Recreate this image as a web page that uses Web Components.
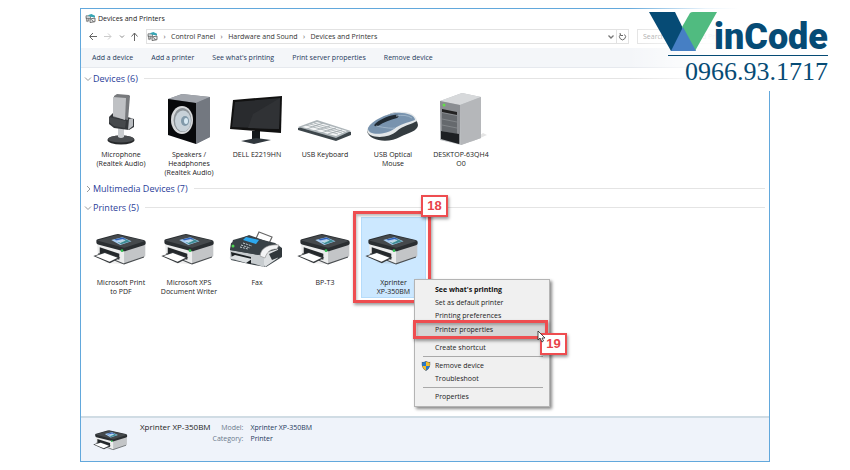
<!DOCTYPE html>
<html lang="en">
<head>
<meta charset="utf-8">
<title>Devices and Printers</title>
<style>
  body { margin: 0; background: #fff; color: #333; font: 7px/9px "Open Sans", "Noto Sans", sans-serif; }
</style>
</head>
<body>
<devices-page></devices-page>

<script>
const base = `:host,*{box-sizing:border-box}button,input{font:inherit;color:inherit;border:0;padding:0;margin:0;background:none}svg{display:block}`;

const art = {
  mini: `<svg viewBox="0 0 12 10" width="11" height="9"><path d="M1 2h5v3H1zM1.500 4v4.500M4 5v3" fill="#cfd8dc" stroke="#666" stroke-width=".8"/><path d="M3 1.500L7 0l4 2v2L6 3z" fill="#35a5b4"/><path d="M5.500 5.500L11 4.500v4l-5.500 1zM3 6v3M7 6l2.500 3" fill="#eee" stroke="#555" stroke-width=".9"/></svg>`,
  mic: `<svg viewBox="0 0 56 52" width="56" height="52"><ellipse cx="28" cy="47" rx="13.500" ry="4.500" fill="#26282a"/><ellipse cx="28" cy="46" rx="13" ry="3.500" fill="#4a4d50"/><path d="M25 35h6v9q-3 2-6 0z" fill="#c9cccf"/><path d="M16 24l4-4 18 5 3 1v8l-5 3-15-2-5-4z" fill="#34373a"/><path d="M36 26l4-1v8l-5 4z" fill="#b9bcc0"/><path d="M21 3l3-2 12 1 1 1-2 24-15-3z" fill="#77797c"/><path d="M20 4l13 1-1 22-12-4z" fill="#bfc1c4"/><path d="M16 24l17 4-1 7-11-2-5-4z" fill="#46494c"/></svg>`,
  speaker: `<svg viewBox="0 0 56 52" width="56" height="52"><path d="M7 6l14-5 28 3v40l-14 7z" fill="#7d8289"/><path d="M7 6l14-5 28 3-14 6z" fill="#a2a6ad"/><path d="M35 10l14-6v40l-14 7z" fill="#737880"/><path d="M7 6l28 4v41L7 42z" fill="#08090b"/><ellipse cx="21" cy="27" rx="11" ry="14" fill="#d6d8da"/><ellipse cx="21.500" cy="27" rx="9" ry="12" fill="#8c9398"/><ellipse cx="22" cy="28" rx="8" ry="10.500" fill="#c7d1d8"/><ellipse cx="24" cy="28" rx="4" ry="5" fill="#8199a9"/><ellipse cx="25" cy="28" rx="2" ry="3" fill="#d9eaf4"/></svg>`,
  monitor: `<svg viewBox="0 0 56 52" width="56" height="52"><path d="M23 38h8v9h-8z" fill="#14181b"/><path d="M12 48l15-3 15 2-17 4z" fill="#30373d"/><path d="M4 7l49-4-1 37-51-4z" fill="#111"/><path d="M6 9l45-4-1 31-47-2z" fill="#292b2e"/><path d="M24 21L51 5l-1 31-31-1z" fill="#303235"/></svg>`,
  keyboard: `<svg viewBox="0 0 56 52" width="56" height="52"><path d="M1 35l19-7 34 11v3l-15 6-38-11z" fill="#3d464b"/><path d="M1 34l19-7 34 11-15 7z" fill="#adb5b9"/><path d="M5 34l15-5 30 9-11 5z" fill="#f3f5f6"/><path d="M9 32l32 9M13 31l32 9M17 30l31 9M10 36l16-6M17 38l16-5M24 40l15-5M31 41l14-4" stroke="#9fa8ac" stroke-width=".8"/></svg>`,
  mouse: `<svg viewBox="0 0 56 52" width="56" height="52"><path d="M2 38c2-7 15-14 25-18 12-3 25 2 26 12 0 6-10 8-18 12-10 6-31 5-33-6z" fill="#343c40"/><path d="M2 37C3 31 14 24 27 20c12-3 24 0 25 8-5 3-15 5-20 10-8 8-30 8-30-1z" fill="#e3e7e9"/><path d="M3 35c4-8 19-14 27-15 10-1 20 2 20 7-8 3-15 4-21 9-8 6-27 7-26-1z" fill="#7893ae"/><path d="M10 31c4-4 12-8 19-9 5-1 6 1 3 3-7 2-13 4-19 8-2 1-5 0-3-2z" fill="#202a33"/><path d="M11 33q15 3 19 2M31 23q10-2 16 2" stroke="#9db3c7" fill="none"/></svg>`,
  tower: `<svg viewBox="0 0 56 52" width="56" height="52"><path d="M38 49l16-7-4-2z" fill="#e5e5e5"/><path d="M7 8L29 0l19 4v41l-20 7-21-5z" fill="#bcbfc2"/><path d="M7 8L29 0l19 4-21 8z" fill="#d7d9db"/><path d="M27 12l21-8v41l-20 7z" fill="#b5b7ba"/><path d="M7 8l20 4v39L8 46z" fill="#8b8e92"/><path d="M9 16l15 3v3L9 19z" fill="#222"/><path d="M9 20l15 3v18L9 38z" fill="#65696d"/><path d="M9 26l15 3M9 32l15 3" stroke="#888b8f" stroke-width=".8"/><path d="M8 38l18 3v10L8 46z" fill="#1d2023"/><circle cx="11" cy="12" r="1.500" fill="#63e04a"/></svg>`,
  printer: `<svg viewBox="10 20 160 94" width="100%" height="100%"><path d="M40 108l62 4 66-24z" fill="#0001"/><path d="M22 46l80 24v41L24 82z" fill="#eceded"/><path d="M102 70l63-22v38q0 4-4 5l-59 20z" fill="#c3c5c7"/><path d="M26 80l72 30 4 1 59-20" fill="none" stroke="#4a4e51" stroke-width="3"/><path d="M20 42q0-3 4-4l52-14q6-2 12-1l72 17q6 2 6 6v5q0 3-5 5l-52 16q-7 3-14 0L25 54q-5-2-5-6z" fill="#2a2e31"/><path d="M22 42l56-16q5-1 10 0l72 16q4 1 0 3l-52 17q-6 2-12 0z" fill="#45494c"/><path d="M64 40l33-8 27 12-33 11z" fill="#a9cdf0"/><path d="M73 39l24-6 12 5-24 7z" fill="#2d62bd"/><path d="M84 47l22-9 15 6-28 9z" fill="#3c8b93"/><path d="M78 42l20-5 9 5-16 7z" fill="#eaf5ff" opacity=".7"/><path d="M30 62l58 19v18L30 82z" fill="#24282b"/><path d="M11 88l34-12 46 17-31 16z" fill="#34383b"/><path d="M17 88l28-9 38 14-24 12z" fill="#fff"/><circle cx="96" cy="72" r="4" fill="#35c254"/></svg>`,
  fax: `<svg viewBox="0 0 56 40" width="56" height="40"><path d="M31 3l13 5-6 13-13-5z" fill="#fff" stroke="#666" stroke-width="1.200"/><path d="M2 21l3-10L19 7l28 7 7 5v9l-16 10-12-2L3 31z" fill="#3a4247"/><path d="M30 26l20-6v9l-13 9z" fill="#dde0e2"/><path d="M2 21l34 6v11l-9-3-25-5z" fill="#c7cccf"/><path d="M3 14L21 6l22 8-10 12-8-1-23-4z" fill="#394247"/><path d="M18 8l13 3-3 4-13-4z" fill="#2da9ef"/><path d="M13 16l9 3M15 14l9 3M12 18l8 2" stroke="#c4cdd1" stroke-dasharray="2 1"/><path d="M3 23l20 5v7L4 30z" fill="#1b2023"/><path d="M1 29l6-3 17 4-6 4z" fill="#dce0e2"/><path d="M32 27c1-8 8-12 19-11l-2 4c-7 0-10 3-12 9z" fill="#f3f4f5" stroke="#888" stroke-width=".6"/><path d="M41 25l13-6v8l-10 4z" fill="#30373b"/><circle cx="5" cy="17" r="1.500" fill="#4fd552"/></svg>`,
  shield: `<svg viewBox="0 0 12 12" width="10" height="10"><path d="M6 0q3 2 5 1 1 8-5 11-6-3-5-11 2 1 5-1z" fill="#4d5c68"/><path d="M6 1v5H1.500V2Q4 2 6 1zM6 6h4.500Q9 10 6 11z" fill="#2779cb"/><path d="M6 1q2 1 4.500 1v4H6zM1.500 6H6v5Q3 10 1.500 6z" fill="#f3bd28"/></svg>`
};

function define(name, template) {
  customElements.define(name, class extends HTMLElement {
    connectedCallback() {
      if (this.shadowRoot) return;
      const root = this.attachShadow({ mode: "open" });
      root.innerHTML = typeof template === "function" ? template(this) : template;
    }
  });
}

define("device-art", el => `<style>${base}:host{display:block}</style>${art[el.getAttribute("kind")]}`);

define("title-bar", `<style>${base}:host{display:flex;align-items:center;gap:2px;height:18px;padding:0 4px;color:#222}h1{font:inherit;margin:0}</style>
  <device-art kind="mini"></device-art><h1><slot></slot></h1>`);

define("address-bar", `<style>${base}
  :host{display:flex;align-items:center;height:19px;padding:0 4px;gap:2px;color:#333}
  .nav{display:flex;align-items:center;gap:5px;width:59px;padding-left:3px}
  .nav button{display:block}
  .nav button svg{fill:none;stroke:#666}
  .path{flex:1;display:flex;align-items:center;height:15px;border:1px solid #e2e2e2}
  ol{display:flex;list-style:none;margin:0;padding:0;flex:1}
  li{display:flex}li::before{content:"›";width:13px;text-align:center;color:#555}
  a{color:inherit;text-decoration:none}
  .drop,.reload{display:grid;place-items:center;height:15px}
  .drop{width:10px}.reload{width:12px;border-left:1px solid #e2e2e2}
  input{width:128px;height:15px;border:1px solid #e2e2e2;padding:0 5px;margin-left:6px;color:#999;outline:0}
  input::placeholder{color:#999;opacity:1}
  </style>
  <div class="nav">
    <button aria-label="Back"><svg width="10" height="9"><path d="M9 4.500H2M5 1L1.500 4.500 5 8"/></svg></button>
    <button aria-label="Forward"><svg width="10" height="9"><path stroke="#ccc" d="M1 4.500h7M5 1.500l3 3-3 3"/></svg></button>
    <button aria-label="Recent"><svg width="7" height="9"><path stroke="#888" d="M2 3.500l2 2 2-2"/></svg></button>
    <button aria-label="Up"><svg width="9" height="9"><path d="M4.500 9V1M1.500 4.500L4.500 1l3 3.500"/></svg></button>
  </div>
  <div class="path"><device-art kind="mini"></device-art>
    <ol><li><a href="#">Control Panel</a></li><li><a href="#">Hardware and Sound</a></li><li><a href="#">Devices and Printers</a></li></ol>
    <button class="drop" aria-label="Show history"><svg width="8" height="6"><path d="M1.500 1.500l2.500 2.500 2.500-2.500" fill="none" stroke="#777" stroke-width="1.300"/></svg></button>
    <button class="reload" aria-label="Refresh"><svg width="9" height="9"><path d="M2.500 2.500a3 3 0 1 0 4 0M2 1l.5 2.500h2.500" fill="none" stroke="#666"/></svg></button>
  </div>
  <input type="search" placeholder="Search Devices and Printers" aria-label="Search">`);

define("command-bar", `<style>${base}:host{display:flex;align-items:center;gap:18px;height:20px;margin-top:2px;padding:0 11px;background:#f4f6f9;border-bottom:1px solid #e6e9ee;color:#1e395b}</style><slot></slot>`);
define("command-link", `<style>${base}:host{display:block}button{display:block;white-space:nowrap}</style><button><slot></slot></button>`);

define("device-group", el => `<style>${base}
  :host{display:block}
  h2{display:flex;align-items:center;gap:3px;height:19px;margin:0;font:9px/12px "Open Sans","Noto Sans",sans-serif;color:#2b4099}
  h2::after{content:"";flex:1;height:1px;background:#e4e4e4;margin:0 4px 0 3px}
  h2 button{display:flex;align-items:center;gap:1px;white-space:nowrap}
  .items{display:grid;grid-template-columns:repeat(auto-fill,68px);padding:0 0 0 3px}
  </style><h2><button aria-expanded="${!el.hasAttribute("closed")}"><svg width="8" height="8"><path fill="none" stroke="#999" d="${el.hasAttribute("closed") ? "M3 1l3 3-3 3" : "M1 2.500l3 3 3-3"}"/></svg>${el.getAttribute("heading")}</button></h2>
  <div class="items"><slot></slot></div>`);

define("device-item", el => `<style>${base}
  :host{display:block;position:relative}
  .tile{display:flex;flex-direction:column;align-items:center;width:100%;line-height:9px;padding-bottom:2px}
  .pic{height:62px;display:grid;place-items:center}
  .wide{height:61px;padding-top:2px}
  .wide device-art{width:54px;height:32px;margin-right:3px}
  .wide .fax{width:56px;height:40px}
  .name{display:block;width:66px;color:#222;overflow-wrap:break-word;white-space:pre-line}
  .sel{background:#cce8ff;box-shadow:inset 0 0 0 1px #b5dcfb;margin:0 2px;width:65px}
  </style><button class="tile ${el.hasAttribute("selected") ? "sel" : ""}"><span class="pic ${el.hasAttribute("printer") ? "wide" : ""}"><device-art class="${el.getAttribute("kind")}" kind="${el.getAttribute("kind")}"></device-art></span><span class="name">${el.getAttribute("name").replace(/\|/g, "\n")}</span></button><slot></slot>`);

define("step-mark", el => `<style>${base}
  :host{display:block;position:absolute;pointer-events:none;border:3px solid #ee4d50;box-shadow:1px 2px 3px #0006,inset 1px 2px 3px #0004}
  b{position:absolute;width:27px;height:22px;display:grid;place-items:center;background:#fff;border:2px solid #ee4d50;box-shadow:1px 2px 3px #0006;color:#e8434a;font:bold 13px/16px "Liberation Sans",sans-serif;${el.getAttribute("at") === "top" ? "right:-20px;top:-19px" : "right:-22px;top:10px"}}
  </style><b><slot></slot></b>`);

define("context-menu", `<style>${base}
  :host{display:block;position:absolute;z-index:2;width:136px;padding:3px 2px;background:#f0f0f0;border:1px solid #b4b4b4;box-shadow:2px 2px 3px #0007;color:#222}</style><div role="menu"><slot></slot></div>`);
define("menu-entry", el => `<style>${base}
  :host{display:block;position:relative}
  :host([current]){z-index:1}
  button{display:grid;grid-template-columns:18px 1fr;align-items:center;width:100%;height:13px;text-align:left}
  device-art{margin-left:4px}
  :host([strong]) button{font-weight:700;color:#111}
  :host([current]) button{background:#d5d5d5;height:14px}
  </style><button role="menuitem"><span>${el.hasAttribute("shield") ? '<device-art kind="shield"></device-art>' : ""}</span><span><slot></slot></span></button><slot name="mark"></slot>`);
define("menu-line", `<style>:host{display:block;height:1px;margin:2px 4px 2px 6px;background:#a9a9a9}</style>`);

define("details-pane", `<style>${base}
  :host{display:flex;min-height:45px;margin-top:auto;padding:2px 12px;background:#eff3fa;border-top:2px solid #d0dce4;color:#1e395b}
  device-art{width:35px;height:22px;margin:9px 12px 0 0}
  strong{font:8px/12px "Open Sans","Noto Sans",sans-serif;color:#222;margin-top:1px}
  dl{display:grid;grid-template-columns:auto auto;gap:0 7px;margin:2px 0 0 2px;align-content:start;line-height:11px}
  dt{text-align:right;color:#6c7a8c}dd{margin:0}
  </style><device-art kind="printer"></device-art><strong>Xprinter XP-350BM</strong>
  <dl><dt>Model:</dt><dd>Xprinter XP-350BM</dd><dt>Category:</dt><dd>Printer</dd></dl>`);

define("brand-badge", `<style>${base}
  :host{display:block;position:absolute;right:0;top:0;width:222px;height:91px;padding:11px 22px 0 0;background:linear-gradient(to right,#fff0,#ffffffe0 35%,#fff 50%);color:#064b75}
  .logo{display:flex;justify-content:flex-end;align-items:flex-end;height:41px}
  .logo svg{margin-right:-3px}
  .word{font:900 36px/36px Roboto,sans-serif;margin-bottom:-3px}
  .tel{display:block;width:160px;margin:3px 0 0 auto;border-top:1px solid #064b75;text-align:right;font:26px/32px "Liberation Serif",serif;color:inherit;text-decoration:none}
  </style><div class="logo"><svg width="68" height="40"><path d="M0 0h26l19 39H22z" fill="#064b75"/><path d="M44 0h24L46 39h-9L33 15l8-14q1-1 3-1z" fill="#50bb80"/><path d="M34 15l13 24H22z" fill="#467fc4"/></svg><span class="word">inCode</span></div><a class="tel" href="tel:0966931717">0966.93.1717</a>`);

define("devices-page", `<style>${base}
  :host{display:flex;position:relative;min-height:100vh;padding:8px 80px}
  main{flex:1;display:flex;flex-direction:column;border:1px solid #62a8dc;background:#fff;min-width:0}
  .groups{padding:1px 0 12px 3px}
  .frame{left:-6px;top:-6px;width:78px;height:92px}
  context-menu{left:55px;top:62px}
  menu-entry step-mark{left:-4px;right:-1px;top:-2px;height:19px}
  .pointer{position:absolute;right:1px;top:8px}
  </style>
  <main>
    <title-bar>Devices and Printers</title-bar>
    <address-bar></address-bar>
    <command-bar><command-link>Add a device</command-link><command-link>Add a printer</command-link><command-link>See what's printing</command-link><command-link>Print server properties</command-link><command-link>Remove device</command-link></command-bar>
    <div class="groups">
      <device-group heading="Devices (6)">
        <device-item kind="mic" name="Microphone|(Realtek Audio)"></device-item>
        <device-item kind="speaker" name="Speakers /|Headphones|(Realtek Audio)"></device-item>
        <device-item kind="monitor" name="DELL E2219HN"></device-item>
        <device-item kind="keyboard" name="USB Keyboard"></device-item>
        <device-item kind="mouse" name="USB Optical|Mouse"></device-item>
        <device-item kind="tower" name="DESKTOP-63QH4|O0"></device-item>
      </device-group>
      <device-group closed heading="Multimedia Devices (7)"></device-group>
      <device-group heading="Printers (5)">
        <device-item printer kind="printer" name="Microsoft Print|to PDF"></device-item>
        <device-item printer kind="printer" name="Microsoft XPS|Document Writer"></device-item>
        <device-item printer kind="fax" name="Fax"></device-item>
        <device-item printer kind="printer" name="BP-T3"></device-item>
        <device-item printer selected kind="printer" name="Xprinter|XP-350BM">
          <step-mark class="frame" at="top">18</step-mark>
          <context-menu>
            <menu-entry strong>See what's printing</menu-entry>
            <menu-entry>Set as default printer</menu-entry>
            <menu-entry>Printing preferences</menu-entry>
            <menu-entry current>Printer properties<step-mark slot="mark" at="side">19</step-mark><svg slot="mark" class="pointer" width="9" height="13"><path d="M1 1v9l2-2 2 4 1.500-1L5 8h3z" fill="#fff" stroke="#222" stroke-width=".8"/></svg></menu-entry>
            <menu-line></menu-line>
            <menu-entry>Create shortcut</menu-entry>
            <menu-line></menu-line>
            <menu-entry shield>Remove device</menu-entry>
            <menu-entry>Troubleshoot</menu-entry>
            <menu-line></menu-line>
            <menu-entry>Properties</menu-entry>
          </context-menu>
        </device-item>
      </device-group>
    </div>
    <details-pane></details-pane>
  </main>
  <brand-badge></brand-badge>`);
</script>
</body>
</html>
